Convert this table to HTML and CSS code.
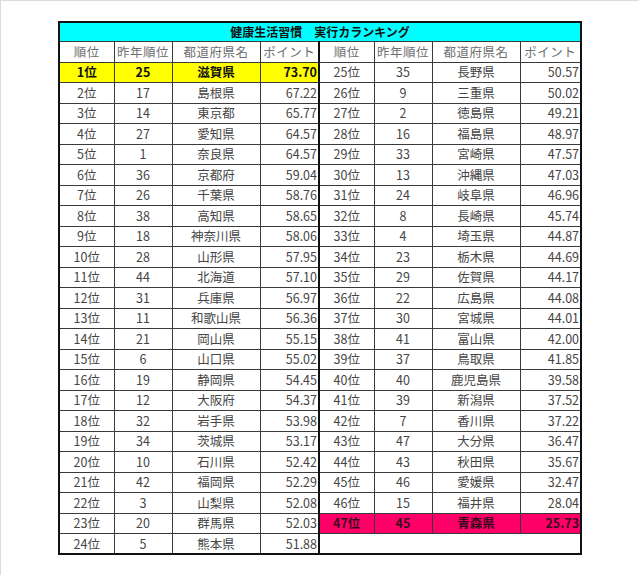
FILE: index.html
```html
<!DOCTYPE html>
<html lang="ja">
<head>
<meta charset="utf-8">
<link rel="stylesheet" href="styles.css">
</head>
<body>
<div class="frame">
<table class="rank">
<colgroup>
<col class="c1"><col class="c2"><col class="c3"><col class="c4">
<col class="c1"><col class="c2"><col class="c3"><col class="c4r">
</colgroup>
<tr class="title"><td colspan="8">健康生活習慣　実行カランキング</td></tr>
<tr class="head"><td>順位</td><td>昨年順位</td><td>都道府県名</td><td>ポイント</td><td class="mid">順位</td><td>昨年順位</td><td>都道府県名</td><td>ポイント</td></tr>
<tr><td class="top">1位</td><td class="top">25</td><td class="top">滋賀県</td><td class="top num">73.70</td><td class="mid">25位</td><td>35</td><td>長野県</td><td class="num">50.57</td></tr>
<tr><td>2位</td><td>17</td><td>島根県</td><td class="num">67.22</td><td class="mid">26位</td><td>9</td><td>三重県</td><td class="num">50.02</td></tr>
<tr><td>3位</td><td>14</td><td>東京都</td><td class="num">65.77</td><td class="mid">27位</td><td>2</td><td>徳島県</td><td class="num">49.21</td></tr>
<tr><td>4位</td><td>27</td><td>愛知県</td><td class="num">64.57</td><td class="mid">28位</td><td>16</td><td>福島県</td><td class="num">48.97</td></tr>
<tr><td>5位</td><td>1</td><td>奈良県</td><td class="num">64.57</td><td class="mid">29位</td><td>33</td><td>宮崎県</td><td class="num">47.57</td></tr>
<tr><td>6位</td><td>36</td><td>京都府</td><td class="num">59.04</td><td class="mid">30位</td><td>13</td><td>沖縄県</td><td class="num">47.03</td></tr>
<tr><td>7位</td><td>26</td><td>千葉県</td><td class="num">58.76</td><td class="mid">31位</td><td>24</td><td>岐阜県</td><td class="num">46.96</td></tr>
<tr><td>8位</td><td>38</td><td>高知県</td><td class="num">58.65</td><td class="mid">32位</td><td>8</td><td>長崎県</td><td class="num">45.74</td></tr>
<tr><td>9位</td><td>18</td><td>神奈川県</td><td class="num">58.06</td><td class="mid">33位</td><td>4</td><td>埼玉県</td><td class="num">44.87</td></tr>
<tr><td>10位</td><td>28</td><td>山形県</td><td class="num">57.95</td><td class="mid">34位</td><td>23</td><td>栃木県</td><td class="num">44.69</td></tr>
<tr><td>11位</td><td>44</td><td>北海道</td><td class="num">57.10</td><td class="mid">35位</td><td>29</td><td>佐賀県</td><td class="num">44.17</td></tr>
<tr><td>12位</td><td>31</td><td>兵庫県</td><td class="num">56.97</td><td class="mid">36位</td><td>22</td><td>広島県</td><td class="num">44.08</td></tr>
<tr><td>13位</td><td>11</td><td>和歌山県</td><td class="num">56.36</td><td class="mid">37位</td><td>30</td><td>宮城県</td><td class="num">44.01</td></tr>
<tr><td>14位</td><td>21</td><td>岡山県</td><td class="num">55.15</td><td class="mid">38位</td><td>41</td><td>富山県</td><td class="num">42.00</td></tr>
<tr><td>15位</td><td>6</td><td>山口県</td><td class="num">55.02</td><td class="mid">39位</td><td>37</td><td>鳥取県</td><td class="num">41.85</td></tr>
<tr><td>16位</td><td>19</td><td>静岡県</td><td class="num">54.45</td><td class="mid">40位</td><td>40</td><td>鹿児島県</td><td class="num">39.58</td></tr>
<tr><td>17位</td><td>12</td><td>大阪府</td><td class="num">54.37</td><td class="mid">41位</td><td>39</td><td>新潟県</td><td class="num">37.52</td></tr>
<tr><td>18位</td><td>32</td><td>岩手県</td><td class="num">53.98</td><td class="mid">42位</td><td>7</td><td>香川県</td><td class="num">37.22</td></tr>
<tr><td>19位</td><td>34</td><td>茨城県</td><td class="num">53.17</td><td class="mid">43位</td><td>47</td><td>大分県</td><td class="num">36.47</td></tr>
<tr><td>20位</td><td>10</td><td>石川県</td><td class="num">52.42</td><td class="mid">44位</td><td>43</td><td>秋田県</td><td class="num">35.67</td></tr>
<tr><td>21位</td><td>42</td><td>福岡県</td><td class="num">52.29</td><td class="mid">45位</td><td>46</td><td>愛媛県</td><td class="num">32.47</td></tr>
<tr><td>22位</td><td>3</td><td>山梨県</td><td class="num">52.08</td><td class="mid">46位</td><td>15</td><td>福井県</td><td class="num">28.04</td></tr>
<tr><td>23位</td><td>20</td><td>群馬県</td><td class="num">52.03</td><td class="mid last">47位</td><td class="last">45</td><td class="last">青森県</td><td class="last num">25.73</td></tr>
<tr><td>24位</td><td>5</td><td>熊本県</td><td class="num">51.88</td><td class="mid empty" colspan="4"></td></tr>
</table>
</div>
</body>
</html>
```

FILE: styles.css
```css
html, body {
  margin: 0;
  padding: 0;
  background: #ffffff;
}
.frame {
  width: 639px;
  height: 575px;
  border-top: 1px solid #dcdcdc;
  border-left: 1px solid #dcdcdc;
  padding: 20px 0 0 57px;
  box-sizing: border-box;
}
.rank {
  border-collapse: collapse;
  table-layout: fixed;
  width: 522px;
  border: 2px solid #111111;
  font-family: "Noto Sans CJK JP", "Noto Sans", sans-serif;
  font-size: 12.5px;
  color: #454545;
}
.c1 { width: 55px; }
.c2 { width: 58px; }
.c3 { width: 88px; }
.c4 { width: 59px; }
.c4r { width: 61px; }
.rank tr {
  height: 20.5px;
}
.rank td {
  border: 1px solid #3a3a3a;
  text-align: center;
  padding: 0;
  line-height: 14px;
  white-space: nowrap;
}
.rank td.num {
  text-align: right;
  padding-right: 1px;
}
.rank .title {
  height: 19px;
}
.rank .title td {
  background: #00ffff;
  color: #111111;
  font-weight: bold;
  font-size: 12px;
}
.rank .head {
  height: 21px;
}
.rank .head td {
  color: #6e6e6e;
  letter-spacing: 0.5px;
}
.rank td.mid {
  border-left: 2px solid #111111;
}
.rank td.top {
  background: #ffff00;
  color: #111111;
  font-weight: bold;
}
.rank td.last {
  background: #ff0068;
  color: #3a0a1c;
  font-weight: bold;
}
.rank td.empty {
  border-right: 2px solid #111111;
}
```
